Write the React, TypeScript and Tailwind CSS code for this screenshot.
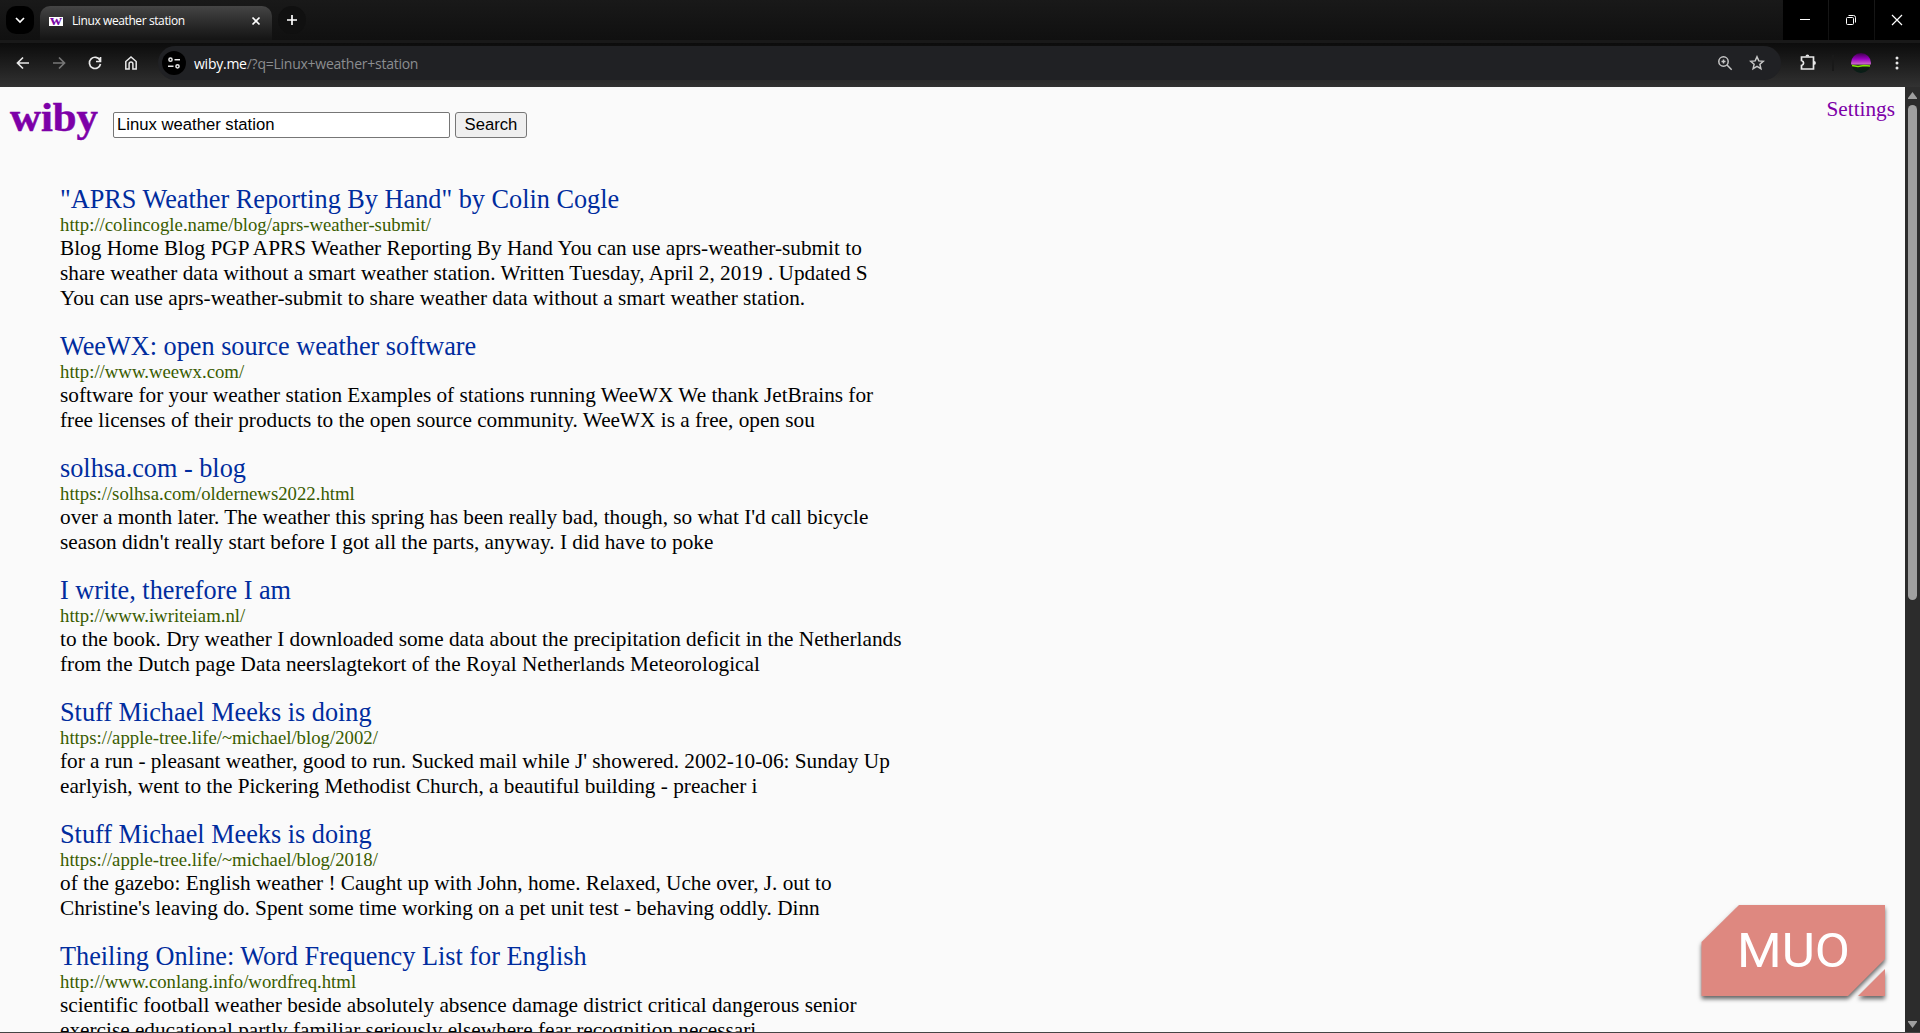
import type { ReactNode } from "react";

type Result = {
  title: string;
  url: string;
  lines: string[];
};

const results: Result[] = [
  {
    title: '"APRS Weather Reporting By Hand" by Colin Cogle',
    url: "http://colincogle.name/blog/aprs-weather-submit/",
    lines: [
      "Blog Home Blog PGP APRS Weather Reporting By Hand You can use aprs-weather-submit to",
      "share weather data without a smart weather station. Written Tuesday, April 2, 2019 . Updated S",
      "You can use aprs-weather-submit to share weather data without a smart weather station.",
    ],
  },
  {
    title: "WeeWX: open source weather software",
    url: "http://www.weewx.com/",
    lines: [
      "software for your weather station Examples of stations running WeeWX We thank JetBrains for",
      "free licenses of their products to the open source community. WeeWX is a free, open sou",
    ],
  },
  {
    title: "solhsa.com - blog",
    url: "https://solhsa.com/oldernews2022.html",
    lines: [
      "over a month later. The weather this spring has been really bad, though, so what I'd call bicycle",
      "season didn't really start before I got all the parts, anyway. I did have to poke",
    ],
  },
  {
    title: "I write, therefore I am",
    url: "http://www.iwriteiam.nl/",
    lines: [
      "to the book. Dry weather I downloaded some data about the precipitation deficit in the Netherlands",
      "from the Dutch page Data neerslagtekort of the Royal Netherlands Meteorological",
    ],
  },
  {
    title: "Stuff Michael Meeks is doing",
    url: "https://apple-tree.life/~michael/blog/2002/",
    lines: [
      "for a run - pleasant weather, good to run. Sucked mail while J' showered. 2002-10-06: Sunday Up",
      "earlyish, went to the Pickering Methodist Church, a beautiful building - preacher i",
    ],
  },
  {
    title: "Stuff Michael Meeks is doing",
    url: "https://apple-tree.life/~michael/blog/2018/",
    lines: [
      "of the gazebo: English weather ! Caught up with John, home. Relaxed, Uche over, J. out to",
      "Christine's leaving do. Spent some time working on a pet unit test - behaving oddly. Dinn",
    ],
  },
  {
    title: "Theiling Online: Word Frequency List for English",
    url: "http://www.conlang.info/wordfreq.html",
    lines: [
      "scientific football weather beside absolutely absence damage district critical dangerous senior",
      "exercise educational partly familiar seriously elsewhere fear recognition necessari",
    ],
  },
];

function Icon({
  size = 16,
  className = "",
  children,
}: {
  size?: number;
  className?: string;
  children: ReactNode;
}) {
  return (
    <svg
      width={size}
      height={size}
      viewBox={`0 0 ${size} ${size}`}
      fill="none"
      stroke="currentColor"
      strokeWidth="1.7"
      className={`shrink-0 ${className}`}
    >
      {children}
    </svg>
  );
}

function TabStrip() {
  return (
    <div className="flex h-10 items-start bg-gradient-to-b from-[#191919] to-[#101010]">
      <button className="mt-1.5 ml-1.5 flex size-7 items-center justify-center rounded-[10px] bg-black text-white">
        <Icon>
          <path d="M4 6l4 4 4-4" />
        </Icon>
      </button>
      <div className="mt-1.5 ml-1.5 flex h-[34px] w-[232px] items-center rounded-t-[10px] bg-gradient-to-b from-[#454545] to-[#141414] pb-1">
        <svg width="14" height="9" viewBox="0 0 14 9" className="ml-[9px] shrink-0 overflow-visible">
          <rect width="14" height="9" fill="#fff" />
          <text
            x="1"
            y="8"
            fontSize="14"
            fontWeight="700"
            fontFamily="Liberation Serif, serif"
            fill="#7a0aa8"
            textLength="12"
            lengthAdjust="spacingAndGlyphs"
          >
            w
          </text>
        </svg>
        <span className="ml-[9px] grow text-[12px] tracking-[-0.4px] text-white">
          Linux weather station
        </span>
        <Icon className="mr-2 text-white">
          <path d="M4.5 4.5l7 7m0-7l-7 7" />
        </Icon>
      </div>
      <button className="mt-1.5 ml-1.5 flex size-7 items-center justify-center rounded-full bg-[#101010] text-white">
        <Icon>
          <path d="M8 3v10M3 8h10" />
        </Icon>
      </button>
      <div className="ml-auto flex h-10 gap-px text-white">
        <button className="flex h-10 w-[45px] items-center justify-center bg-black pr-0.5">
          <Icon size={12}>
            <path d="M1 5.5h10" strokeWidth="1" />
          </Icon>
        </button>
        <button className="flex h-10 w-[45px] items-center justify-center bg-black pr-0.5">
          <Icon size={12}>
            <rect x="1.5" y="3.5" width="7" height="7" rx="1" strokeWidth="1" />
            <path d="M3.5 1.5h5a2 2 0 0 1 2 2v5" strokeWidth="1" />
          </Icon>
        </button>
        <button className="flex h-10 w-[45px] items-center justify-center bg-black pr-0.5">
          <Icon size={12}>
            <path d="M1 1l10 10M11 1L1 11" strokeWidth="1.2" />
          </Icon>
        </button>
      </div>
    </div>
  );
}

function Toolbar() {
  return (
    <div className="flex h-[47px] items-center border-t-[3px] border-[#191919] bg-gradient-to-b from-[#0c0c0c] to-[#323232] pb-1 text-[#e8e8e8]">
      <Icon className="ml-[15px]">
        <path d="M14 8H2.5M8 2.5L2.5 8 8 13.5" />
      </Icon>
      <Icon className="ml-5 text-[#777]">
        <path d="M2 8h11.5M8 2.5L13.5 8 8 13.5" />
      </Icon>
      <Icon className="ml-5">
        <path d="M13 5.3A5.6 5.6 0 1 0 13.5 9M13.5 2v4.5H9" />
      </Icon>
      <Icon className="ml-5">
        <path d="M2.8 14V6.5L8 2l5.2 4.5V14H9.9V9a1.9 1.9 0 0 0-3.8 0v5z" strokeWidth="1.5" />
      </Icon>
      <div className="ml-[19px] flex h-[34px] w-[1623px] items-center rounded-full bg-[#202124] pl-1">
        <span className="flex size-6 items-center justify-center rounded-full bg-black">
          <Icon size={14}>
            <circle cx="3.5" cy="3.7" r="1.6" strokeWidth="1.5" />
            <path d="M7.5 3.7H13M1 10.3h5.5" strokeWidth="1.5" />
            <circle cx="10.5" cy="10.3" r="1.6" strokeWidth="1.5" />
          </Icon>
        </span>
        <span className="ml-2 text-[14px] tracking-[-0.25px] text-[#8b8d90]">
          <span className="text-white">wiby.me</span>/?q=Linux+weather+station
        </span>
        <Icon className="ml-auto text-[#c7c7c7]">
          <circle cx="6.5" cy="6.5" r="4.7" strokeWidth="1.5" />
          <path d="M10 10l4.7 4.7M4.5 6.5h4M6.5 4.5v4" strokeWidth="1.5" />
        </Icon>
        <Icon className="mr-4 ml-4 text-[#c7c7c7]">
          <path
            d="M8 1.8l1.8 4.1 4.5.4-3.4 3 1 4.4L8 11.400l-3.900 2.300 1-4.400-3.400-3 4.500-.4z"
            strokeWidth="1.5"
          />
        </Icon>
      </div>
      <Icon size={18} className="mb-0.5 ml-[17px]">
        <path d="M3.500 4h12v12h-12v-3.500c2.800-.8 2.800-4.200 0-5z" />
        <path
          d="M7.500 3.500a1.900 1.900 0 0 1 3.800 0zM16 8a1.900 1.900 0 0 1 0 3.800z"
          fill="currentColor"
          stroke="none"
        />
      </Icon>
      <span className="ml-[16px] h-4 w-0.5 bg-[#191919]" />
      <svg width="20" height="20" viewBox="0 0 20 20" className="ml-[17px] shrink-0">
        <defs>
          <linearGradient id="aurora" x2="0" y2="1">
            <stop offset="0" stopColor="#3d004b" />
            <stop offset=".3" stopColor="#9a00c0" />
            <stop offset=".55" stopColor="#c966c8" />
            <stop offset=".62" stopColor="#172010" />
            <stop offset="1" stopColor="#061c18" />
          </linearGradient>
        </defs>
        <circle cx="10" cy="10" r="10" fill="url(#aurora)" />
        <path d="M1 12.5l6 1 6-1 6 .5" stroke="#80e800" strokeWidth="1.3" fill="none" />
      </svg>
      <Icon className="ml-[18px]">
        <g fill="currentColor" stroke="none">
          <circle cx="8" cy="3" r="1.5" />
          <circle cx="8" cy="8" r="1.5" />
          <circle cx="8" cy="13" r="1.5" />
        </g>
      </Icon>
    </div>
  );
}

function SearchHeader() {
  return (
    <header className="flex items-start">
      <svg width="92" height="52" viewBox="0 0 92 52" className="mt-2 ml-2 shrink-0">
        <text
          x="2"
          y="36"
          fontSize="40"
          fontWeight="700"
          fontFamily="Liberation Serif, serif"
          fill="#7d00a8"
          stroke="#7d00a8"
          strokeWidth="0.5"
          textLength="88"
          lengthAdjust="spacingAndGlyphs"
        >
          wiby
        </text>
      </svg>
      <form className="mt-[25px] ml-[13px] flex gap-[5px] font-['Liberation_Sans',Arial,sans-serif] text-[16.67px]">
        <input
          type="text"
          defaultValue="Linux weather station"
          className="h-[26px] w-[337px] rounded-[2px] border border-[#767676] bg-white px-[3px] text-black"
        />
        <button
          type="button"
          className="h-[26px] w-[72px] rounded-[3px] border border-[#767676] bg-[#efefef] text-center leading-6 text-black"
        >
          Search
        </button>
      </form>
      <a className="mt-[10px] mr-[10px] ml-auto text-[21.25px] leading-[25px] text-[#7d00a8]">
        Settings
      </a>
    </header>
  );
}

function ResultItem({ result }: { result: Result }) {
  return (
    <article className="whitespace-nowrap">
      <h2 className="pt-px text-[26.25px] leading-[29px] text-[#002c9e]">{result.title}</h2>
      <p className="mb-px text-[18.75px] leading-[21px] text-[#395c00]">{result.url}</p>
      {result.lines.map((line) => (
        <p key={line} className="text-[21.25px] leading-[25px] text-black">
          {line}
        </p>
      ))}
    </article>
  );
}

function Scrollbar() {
  return (
    <div className="flex w-[15px] shrink-0 flex-col items-center bg-[#2c2c2c]">
      <svg width="9" height="7" viewBox="0 0 9 7" className="mt-[5px]">
        <path d="M4.5 0L9 6v1H0V6z" fill="#9f9f9f" />
      </svg>
      <div className="mt-[6px] h-[495px] w-[9px] rounded-full bg-[#9f9f9f]" />
      <svg width="9" height="7" viewBox="0 0 9 7" className="mt-auto mb-1">
        <path d="M0 0h9v1L4.5 7 0 1z" fill="#9f9f9f" />
      </svg>
    </div>
  );
}

function Watermark() {
  return (
    <svg
      width="200"
      height="110"
      viewBox="0 0 200 110"
      className="absolute right-[13px] bottom-[26px] drop-shadow-[0px_3px_2px_rgba(0,0,0,0.6)]"
    >
      <path d="M47 9h146v54l-37 37H9.500V46z" fill="#de8880" />
      <path d="M193 73v27h-27z" fill="#de8880" />
      <text
        x="45"
        y="71"
        fontSize="49"
        fontFamily="Roboto, sans-serif"
        fill="#fff"
        textLength="113"
        lengthAdjust="spacingAndGlyphs"
      >
        MUO
      </text>
    </svg>
  );
}

export default function App() {
  return (
    <div className="flex h-[1033px] w-[1920px] flex-col overflow-hidden bg-[#fafafa]">
      <div className="shrink-0 font-['Open_Sans','Noto_Sans',sans-serif]">
        <TabStrip />
        <Toolbar />
      </div>
      <div className="flex min-h-0 grow border-b border-[#444]">
        <main className="relative min-w-0 grow overflow-hidden font-['Liberation_Serif','Times_New_Roman',serif]">
          <SearchHeader />
          <div className="mt-[37px] ml-[60px] flex flex-col gap-5">
            {results.map((r) => (
              <ResultItem key={r.url} result={r} />
            ))}
          </div>
          <Watermark />
        </main>
        <Scrollbar />
      </div>
    </div>
  );
}
